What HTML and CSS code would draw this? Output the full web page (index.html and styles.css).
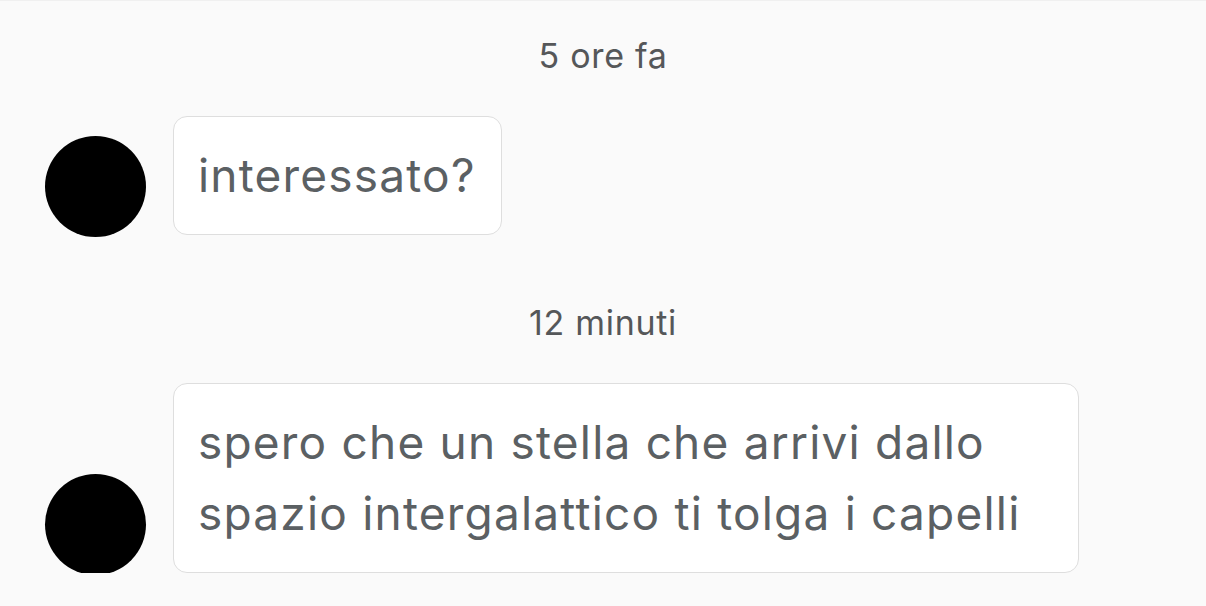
FILE: index.html
```html
<!DOCTYPE html>
<html lang="it">
<head>
  <meta charset="UTF-8" />
  <meta name="viewport" content="width=device-width, initial-scale=1.0" />
  <title>Messaggi</title>
  <link rel="stylesheet" href="styles.css">
</head>
<body>
  <div class="chat">
    <div class="orario">5 ore fa</div>
    <div class="messaggio">
      <div class="avatar"></div>
      <div class="fumetto">interessato?</div>
    </div>

    <div class="orario secondo">12 minuti</div>
    <div class="messaggio">
      <div class="avatar"></div>
      <div class="fumetto">spero che un stella che arrivi dallo spazio intergalattico ti tolga i capelli</div>
    </div>
  </div>
</body>
</html>
```

FILE: styles.css
```css
body {
  font-family: Inter, "Noto Sans", sans-serif;
  background: #fafafa;
  margin: 0;
  padding: 0;
  overflow: hidden;
}

.chat {
  padding: 35px 0 0 45px;
  border-top: 1px solid #f0f0f0;
}

.orario {
  text-align: center;
  font-size: 34px;
  line-height: 40px;
  letter-spacing: 0.7px;
  color: #555759;
  margin-left: -45px;
  margin-bottom: 40px;
}

.orario.secondo {
  margin-top: 68px;
}

.messaggio {
  display: flex;
  align-items: flex-end;
  gap: 27px;
}

.avatar {
  width: 101px;
  height: 101px;
  border-radius: 50%;
  background: #000;
  flex-shrink: 0;
  margin-bottom: -2px;
}

.fumetto {
  box-sizing: border-box;
  max-width: 906px;
  padding: 23px 25px 23px 24px;
  background: #fff;
  border: 1px solid #dedede;
  border-radius: 14px;
  font-size: 46px;
  line-height: 71px;
  letter-spacing: 1.2px;
  color: #5b6063;
}
```
